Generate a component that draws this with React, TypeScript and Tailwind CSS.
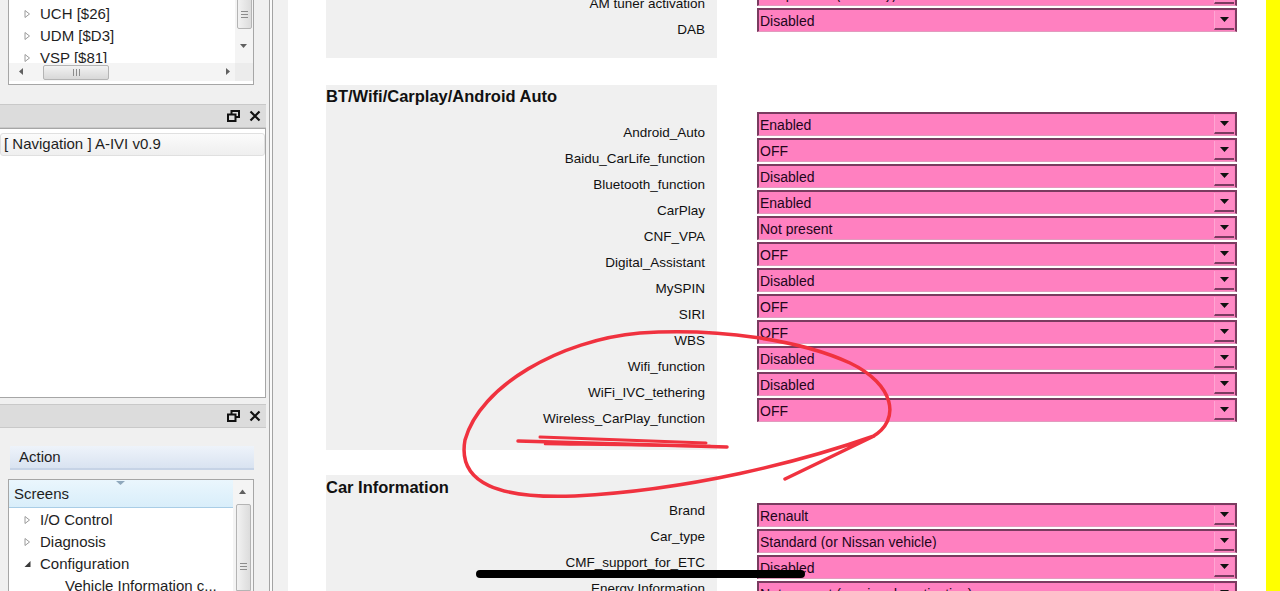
import React from "react";

type Row = { label: string; value: string };

const radioRows: Row[] = [
  { label: "AM tuner activation", value: "Not present (AM only)" },
  { label: "DAB", value: "Disabled" },
];

const connectivityRows: Row[] = [
  { label: "Android_Auto", value: "Enabled" },
  { label: "Baidu_CarLife_function", value: "OFF" },
  { label: "Bluetooth_function", value: "Disabled" },
  { label: "CarPlay", value: "Enabled" },
  { label: "CNF_VPA", value: "Not present" },
  { label: "Digital_Assistant", value: "OFF" },
  { label: "MySPIN", value: "Disabled" },
  { label: "SIRI", value: "OFF" },
  { label: "WBS", value: "OFF" },
  { label: "Wifi_function", value: "Disabled" },
  { label: "WiFi_IVC_tethering", value: "Disabled" },
  { label: "Wireless_CarPlay_function", value: "OFF" },
];

const carRows: Row[] = [
  { label: "Brand", value: "Renault" },
  { label: "Car_type", value: "Standard (or Nissan vehicle)" },
  { label: "CMF_support_for_ETC", value: "Disabled" },
  { label: "Energy Information", value: "Not present (service de activation)" },
];

function OpenArrow() {
  return (
    <svg width="7" height="10" viewBox="0 0 7 10" className="shrink-0">
      <path d="M1 1.5 L5.5 5 L1 8.5 Z" fill="none" stroke="#9a9a9a" strokeWidth="1" />
    </svg>
  );
}

function ExpandedArrow() {
  return (
    <svg width="7" height="10" viewBox="0 0 7 10" className="shrink-0">
      <path d="M6.5 2 L6.5 8 L0.5 8 Z" fill="#3a3a3a" />
    </svg>
  );
}

function TreeItem({ label, open }: { label: string; open?: boolean }) {
  return (
    <li className="flex h-[22px] items-center gap-[9px] pl-[15px] whitespace-nowrap">
      {open ? <ExpandedArrow /> : <OpenArrow />}
      <span>{label}</span>
    </li>
  );
}

function Grip({ vertical }: { vertical?: boolean }) {
  return vertical ? (
    <div className="flex flex-col gap-[2px]">
      <span className="h-px w-[7px] bg-[#8c8c8c]" />
      <span className="h-px w-[7px] bg-[#8c8c8c]" />
      <span className="h-px w-[7px] bg-[#8c8c8c]" />
    </div>
  ) : (
    <div className="flex gap-[2px]">
      <span className="h-[7px] w-px bg-[#8c8c8c]" />
      <span className="h-[7px] w-px bg-[#8c8c8c]" />
      <span className="h-[7px] w-px bg-[#8c8c8c]" />
    </div>
  );
}

function PaneHeader() {
  return (
    <div className="flex h-[24px] items-center justify-end gap-[9px] border-y border-[#c9c9c9] bg-[#dcdcdc] pr-[5px]">
      {/* float / restore */}
      <svg width="13" height="12" viewBox="0 0 13 12">
        <rect x="4.5" y="1" width="7.5" height="6" fill="none" stroke="#111" strokeWidth="2" />
        <rect x="1" y="4.5" width="7.5" height="6.5" fill="#dcdcdc" stroke="#111" strokeWidth="2" />
      </svg>
      {/* close */}
      <svg width="12" height="12" viewBox="0 0 12 12">
        <path d="M1.5 1.5 L10.5 10.5 M10.5 1.5 L1.5 10.5" stroke="#111" strokeWidth="2.2" />
      </svg>
    </div>
  );
}

function LeftPanel() {
  return (
    <aside className="flex h-full w-[266px] shrink-0 flex-col bg-[#f0f0f0] text-[15px] text-[#1e1e1e]">
      {/* ECU tree */}
      <div className="mx-[8px] -mt-[2px] flex h-[87px] w-[246px] flex-col border border-[#a6a6a6] bg-white">
        <div className="flex min-h-0 flex-1">
          <ul className="min-w-0 flex-1 overflow-hidden pt-[4px]">
            <TreeItem label="UCH [$26]" />
            <TreeItem label="UDM [$D3]" />
            <TreeItem label="VSP [$81]" />
          </ul>
          <div className="flex w-[18px] flex-col items-center bg-[#f4f4f4]">
            <div className="flex h-[30px] w-[15px] items-center justify-center rounded-b-[2px] border border-[#b4b4b4] bg-gradient-to-r from-[#f2f2f2] to-[#dcdcdc]">
              <Grip vertical />
            </div>
            <svg width="8" height="5" viewBox="0 0 8 5" className="mt-[15px]">
              <path d="M0 0h7L3.5 4z" fill="#606060" />
            </svg>
          </div>
        </div>
        <div className="mb-[3px] flex h-[18px] items-center bg-[#f4f4f4]">
          <svg width="5" height="8" viewBox="0 0 5 8" className="ml-[10px]">
            <path d="M4 0v7L0 3.5z" fill="#606060" />
          </svg>
          <div className="ml-[19px] flex h-[15px] w-[66px] items-center justify-center rounded-[2px] border border-[#b4b4b4] bg-gradient-to-b from-[#f2f2f2] to-[#d8d8d8]">
            <Grip />
          </div>
          <svg width="5" height="8" viewBox="0 0 5 8" className="ml-[117px]">
            <path d="M0 0v7L4 3.5z" fill="#606060" />
          </svg>
          <div className="ml-auto h-full w-[18px] bg-[#ececec]" />
        </div>
      </div>

      <div className="mt-[19px]">
        <PaneHeader />
      </div>

      {/* project pane */}
      <div className="h-[270px] border border-l-0 border-[#a6a6a6] bg-white pt-[4px]">
        <div className="flex h-[23px] items-center rounded-[3px] border border-[#e0e0e0] bg-gradient-to-b from-[#fbfbfb] to-[#efefef] pl-[3px]">
          [ Navigation ] A-IVI v0.9
        </div>
      </div>

      <div className="mt-[6px]">
        <PaneHeader />
      </div>

      {/* action pane */}
      <div className="mx-[10px] mt-[18px] flex h-[24px] w-[244px] items-center border-b-2 border-[#c6d3e6] bg-gradient-to-b from-[#eef3fa] to-[#d9e3f1] pl-[9px]">
        Action
      </div>
      <div className="mx-[8px] mt-[9px] flex min-h-0 w-[246px] flex-1 border border-b-0 border-[#a6a6a6] bg-white">
        <div className="min-w-0 flex-1">
          <div className="relative flex h-[28px] items-center border-b border-[#a9cde6] bg-gradient-to-b from-[#eaf6fd] to-[#d9eefa] pl-[5px] pt-[2px]">
            Screens
            <svg width="9" height="4" viewBox="0 0 9 4" className="absolute left-[107px] top-[1px]">
              <path d="M0 0h9L4.5 4z" fill="#8fa8bd" />
            </svg>
          </div>
          <ul className="pt-px">
            <TreeItem label="I/O Control" />
            <TreeItem label="Diagnosis" />
            <TreeItem label="Configuration" open />
            <li className="flex h-[22px] items-center pl-[56px] whitespace-nowrap">
              Vehicle Information c...
            </li>
          </ul>
        </div>
        <div className="flex w-[20px] flex-col items-center bg-[#f4f4f4] pt-[9px]">
          <svg width="8" height="5" viewBox="0 0 8 5">
            <path d="M0 5h7L3.5 0.5z" fill="#606060" />
          </svg>
          <div className="mt-[10px] flex w-[15px] flex-1 items-start justify-center rounded-t-[2px] border border-[#b4b4b4] bg-gradient-to-r from-[#f2f2f2] to-[#dcdcdc] pt-[58px]">
            <Grip vertical />
          </div>
        </div>
      </div>
    </aside>
  );
}

function Splitter() {
  return (
    <div className="flex h-full w-[22px] shrink-0">
      <div className="w-[3px] bg-[#f0f0f0]" />
      <div className="w-px bg-[#a3a3a3]" />
      <div className="w-[2px] bg-[#fafafa]" />
      <div className="w-px bg-[#a3a3a3]" />
      <div className="w-[15px] bg-[#f1f1f1]" />
    </div>
  );
}

function Combo({ value }: { value: string }) {
  return (
    <div className="flex h-[24px] items-center border-2 border-b border-[#7a3b60] border-b-[#e29bbe] bg-[#ff80c0] pl-px pr-[1px]">
      <span className="min-w-0 flex-1 truncate text-[14px] leading-none text-[#22061a]">{value}</span>
      <span className="flex h-[19px] w-[20px] items-center justify-center border-b-2 border-l border-[#7a3b60] border-l-[#ffa6d3] bg-[#ff8ac5]">
        <svg width="9" height="5" viewBox="0 0 9 5">
          <path d="M0 0h9L4.5 5z" fill="#111" />
        </svg>
      </span>
    </div>
  );
}

function Section({
  title,
  rows,
  boxClass,
  headClass,
  listClass,
  comboClass,
}: {
  title: string;
  rows: Row[];
  boxClass: string;
  headClass: string;
  listClass: string;
  comboClass: string;
}) {
  return (
    <section className="flex items-start">
      <div className={`w-[391px] bg-[#f0f0f0] ${boxClass}`}>
        <h3 className={`flex h-[22px] items-center text-[16.5px] font-bold text-[#111] ${headClass}`}>{title}</h3>
        <div className={listClass}>
          {rows.map((r) => (
            <div key={r.label} className="flex h-[26px] items-center justify-end pr-[12px] pt-px text-[13.5px] text-[#101010]">
              {r.label}
            </div>
          ))}
        </div>
      </div>
      <div className={`ml-[40px] flex w-[480px] flex-col gap-[2px] ${comboClass}`}>
        {rows.map((r) => (
          <Combo key={r.label} value={r.value} />
        ))}
      </div>
    </section>
  );
}

function Annotation() {
  return (
    <svg
      className="pointer-events-none absolute left-0 top-0"
      width="1280"
      height="591"
      viewBox="0 0 1280 591"
      fill="none"
    >
      <path
        d="M785 479 L872 437 C902 420 894 384 850 363 C800 340 720 328 640 333 C560 340 480 386 465 440 C457 484 500 499 575 496 C690 490 800 462 874 436"
        stroke="#f0323f"
        strokeWidth="3.5"
        strokeLinecap="round"
        strokeLinejoin="round"
      />
      <path d="M518 441 C590 443 660 445 727 447" stroke="#f0323f" strokeWidth="3.5" strokeLinecap="round" />
      <path d="M540 437 C600 439 655 441 706 443" stroke="#f0323f" strokeWidth="3" strokeLinecap="round" />
      <path d="M545 444 C610 445 660 446 710 446" stroke="#f0323f" strokeWidth="2.5" strokeLinecap="round" />
    </svg>
  );
}

export default function App() {
  return (
    <div className="relative flex h-[591px] w-[1280px] overflow-hidden bg-white font-['Liberation_Sans',Arial,sans-serif]">
      <LeftPanel />
      <Splitter />

      <main className="h-full min-w-0 flex-1 overflow-hidden bg-white pl-[38px]">
        <div className="-mt-[44px] flex flex-col">
          <Section
            title="Radio"
            rows={radioRows}
            boxClass="pb-[15px]"
            headClass=""
            listClass="mt-[13px]"
            comboClass="pt-[26px]"
          />
          <div className="h-[27px]" />
          <Section
            title="BT/Wifi/Carplay/Android Auto"
            rows={connectivityRows}
            boxClass="pb-[18px]"
            headClass=""
            listClass="mt-[13px]"
            comboClass="pt-[27px]"
          />
          <div className="h-[25px]" />
          <Section
            title="Car Information"
            rows={carRows}
            boxClass="pb-[20px]"
            headClass="mt-px"
            listClass=""
            comboClass="pt-[28px]"
          />
        </div>
      </main>

      <div className="h-full w-[14px] shrink-0 bg-[#ffff00]" />

      <Annotation />
      <div className="absolute left-[476px] top-[570px] h-[8px] w-[329px] rounded-full bg-black" />
    </div>
  );
}
